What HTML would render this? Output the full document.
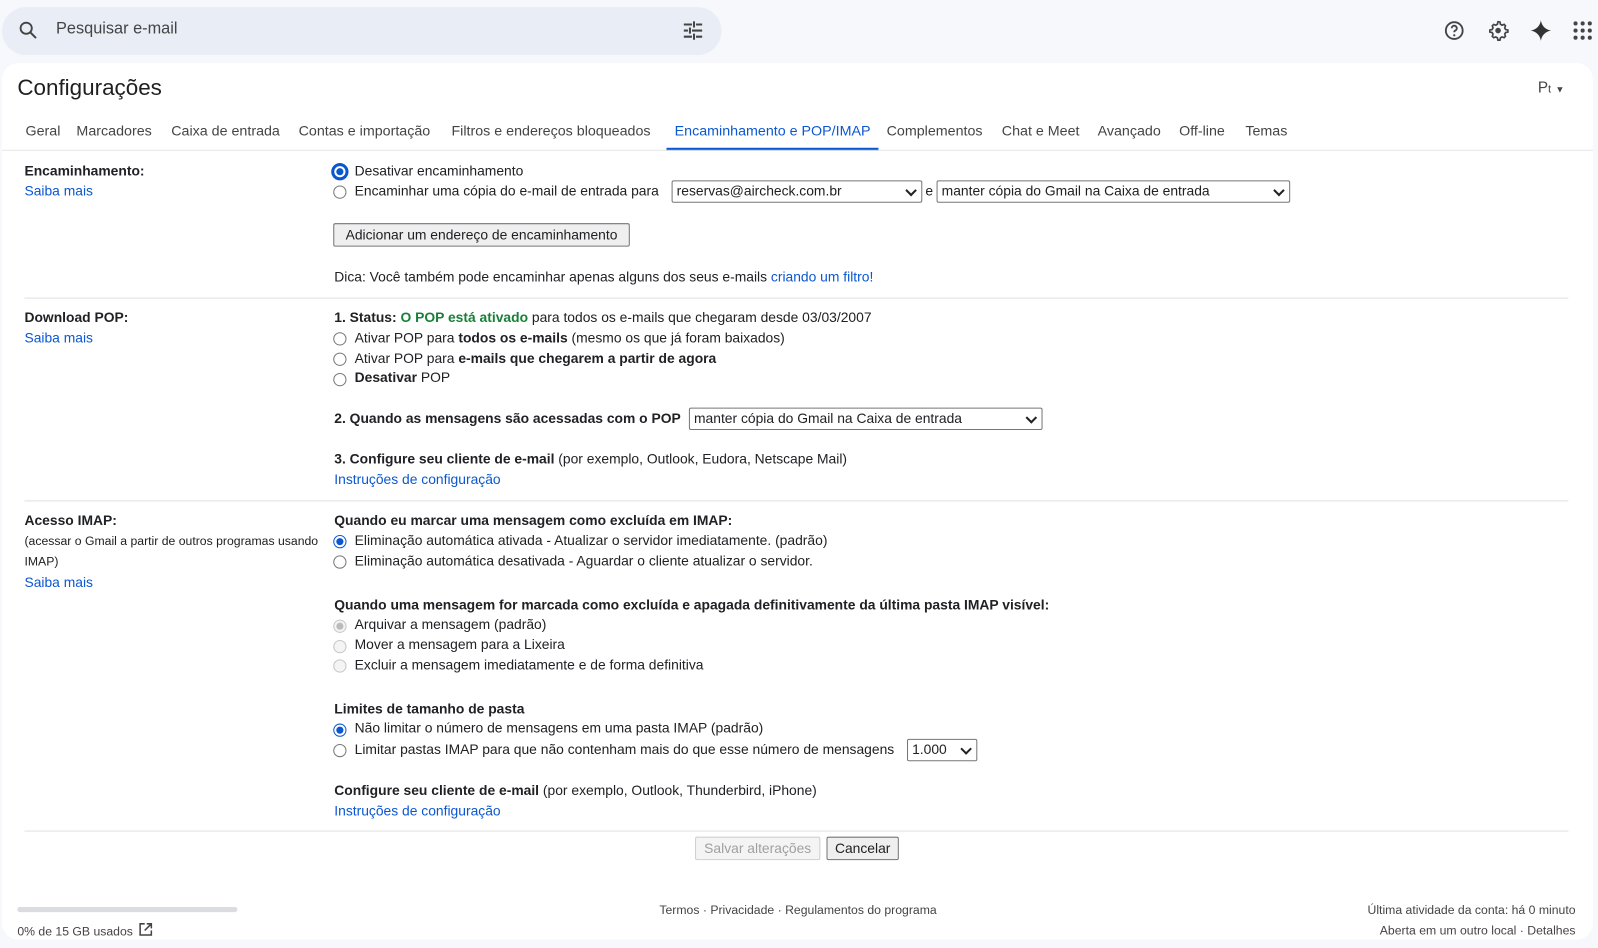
<!DOCTYPE html>
<html><head><meta charset="utf-8"><style>
*{box-sizing:border-box;margin:0;padding:0}
html,body{width:1598px;height:948px;overflow:hidden}
body{background:#f6f8fc;font-family:"Liberation Sans",Arial,sans-serif;font-size:13.6px;color:#202124}
#w{position:absolute;left:0;top:0;width:1568px;height:930px;transform:scale(1.0191);transform-origin:0 0}
.a{position:absolute;white-space:nowrap;line-height:20px}
.l{color:#0b57d0}
b{font-weight:bold}
.hr{position:absolute;left:24px;width:1515px;height:1px;background:#e0e0e0}
.r{position:absolute;width:13px;height:13px;border:1px solid #767676;border-radius:50%;background:#fff}
.r.on{border:1px solid #0b57d0}
.r.on::after{content:"";position:absolute;left:2px;top:2px;width:7px;height:7px;border-radius:50%;background:#0b57d0}
.r.dis{border-color:#c6c6c6;background:#f4f4f4}
.sel{position:absolute;height:22px;border:1px solid #767676;border-radius:2px;background:#fff;line-height:20px;padding-left:4px;font-size:13.6px}
.sel::after{content:"";position:absolute;right:6px;top:5px;width:6px;height:6px;border-right:2px solid #222;border-bottom:2px solid #222;transform:rotate(45deg)}
.btn{position:absolute;height:23px;border:1px solid #767676;border-radius:2px;background:#efefef;line-height:21px;text-align:center}
</style></head><body><div id="w">
<div style="position:absolute;left:2px;top:7px;width:706px;height:47px;border-radius:24px;background:#e9eef6"></div>
<svg style="position:absolute;left:17px;top:19px" width="22" height="22" viewBox="0 0 24 24"><circle cx="9.5" cy="9.5" r="6" fill="none" stroke="#444" stroke-width="2"/><path d="M14 14l6 6" stroke="#444" stroke-width="2.2"/></svg>
<div class="a" style="left:55px;top:19px;font-size:16px;color:#444">Pesquisar e-mail</div>
<svg style="position:absolute;left:670px;top:20px" width="20" height="20" viewBox="0 0 20 20" stroke="#444" stroke-width="2"><path d="M1 4h8M13 4h6M11 1v6M1 10h4M9 10h10M7 7v6M1 16h8M13 16h6M11 13v6"/></svg>
<svg style="position:absolute;left:1416px;top:19px" width="22" height="22" viewBox="0 0 24 24"><circle cx="12" cy="12" r="9" fill="none" stroke="#444" stroke-width="2"/><path d="M9.3 9.5a2.7 2.7 0 1 1 3.7 2.5c-.8.4-1 .9-1 1.8" fill="none" stroke="#444" stroke-width="2"/><circle cx="12" cy="17" r="1.2" fill="#444"/></svg>
<svg style="position:absolute;left:1459px;top:19px" width="22" height="22" viewBox="0 0 24 24"><path d="M12 2.5l2 .3.5 2.4 1.7 1 2.3-.8 1.4 1.5-.8 2.3 1 1.7 2.4.5v2.2l-2.4.5-1 1.7.8 2.3-1.4 1.5-2.3-.8-1.7 1-.5 2.4h-2.2l-.5-2.4-1.7-1-2.3.8-1.5-1.5.8-2.3-1-1.7-2.4-.5v-2.2l2.4-.5 1-1.7-.8-2.3 1.5-1.5 2.3.8 1.7-1 .5-2.4z" fill="none" stroke="#444" stroke-width="1.8"/><circle cx="12" cy="12" r="3" fill="#444"/></svg>
<svg style="position:absolute;left:1501px;top:19px" width="22" height="22" viewBox="0 0 24 24"><path d="M12 1C12.8 7 17 11.2 23 12 17 12.8 12.8 17 12 23 11.2 17 7 12.8 1 12 7 11.2 11.2 7 12 1z" fill="#333"/></svg>
<svg style="position:absolute;left:1543px;top:20px" width="20" height="20" viewBox="0 0 20 20" fill="#444"><circle cx="3" cy="3" r="2"/><circle cx="10" cy="3" r="2"/><circle cx="17" cy="3" r="2"/><circle cx="3" cy="10" r="2"/><circle cx="10" cy="10" r="2"/><circle cx="17" cy="10" r="2"/><circle cx="3" cy="17" r="2"/><circle cx="10" cy="17" r="2"/><circle cx="17" cy="17" r="2"/></svg>

<div style="position:absolute;left:2px;top:62px;width:1561px;height:860px;background:#fff;border-radius:16px"></div>
<div class="a" style="left:17px;top:72px;font-size:22px;line-height:28px;color:#1f1f1f">Configurações</div>
<div class="a" style="left:1509px;top:77px;font-size:15px;color:#444">P<span style="font-size:11px">t</span> <span style="font-size:9px">▼</span></div>

<div class="a" style="top:118px;left:0;width:1563px;height:30px;color:#444;font-size:14px">
<span class="a" style="left:25px">Geral</span><span class="a" style="left:75px">Marcadores</span><span class="a" style="left:168px">Caixa de entrada</span><span class="a" style="left:293px">Contas e importação</span><span class="a" style="left:443px">Filtros e endereços bloqueados</span><span class="a" style="left:662px;color:#0b57d0">Encaminhamento e POP/IMAP</span><span class="a" style="left:870px">Complementos</span><span class="a" style="left:983px">Chat e Meet</span><span class="a" style="left:1077px">Avançado</span><span class="a" style="left:1157px">Off-line</span><span class="a" style="left:1222px">Temas</span>
</div>
<div style="position:absolute;left:654px;top:145px;width:208px;height:3px;background:#0b57d0"></div>
<div style="position:absolute;left:2px;top:147px;width:1561px;height:1px;background:#e6e6e6"></div>

<div class="a" style="left:24px;top:158px"><b>Encaminhamento:</b></div>
<div class="a l" style="left:24px;top:178px">Saiba mais</div>
<div class="r on" style="left:327px;top:162px;box-shadow:0 0 0 2px #0b57d0"></div>
<div class="a" style="left:348px;top:158px">Desativar encaminhamento</div>
<div class="r" style="left:327px;top:182px"></div>
<div class="a" style="left:348px;top:178px">Encaminhar uma cópia do e-mail de entrada para</div>
<div class="sel" style="left:659px;top:177px;width:246px">reservas@aircheck.com.br</div>
<div class="a" style="left:908px;top:178px">e</div>
<div class="sel" style="left:919px;top:177px;width:347px">manter cópia do Gmail na Caixa de entrada</div>
<div class="btn" style="left:327px;top:219px;width:291px">Adicionar um endereço de encaminhamento</div>
<div class="a" style="left:328px;top:262px">Dica: Você também pode encaminhar apenas alguns dos seus e-mails <span class="l">criando um filtro!</span></div>
<div class="hr" style="top:292px"></div>

<div class="a" style="left:24px;top:302px"><b>Download POP:</b></div>
<div class="a l" style="left:24px;top:322px">Saiba mais</div>
<div class="a" style="left:328px;top:302px"><b>1. Status: </b><b style="color:#188038">O POP está ativado</b> para todos os e-mails que chegaram desde 03/03/2007</div>
<div class="r" style="left:327px;top:326px"></div><div class="a" style="left:348px;top:322px">Ativar POP para <b>todos os e-mails</b> (mesmo os que já foram baixados)</div>
<div class="r" style="left:327px;top:346px"></div><div class="a" style="left:348px;top:342px">Ativar POP para <b>e-mails que chegarem a partir de agora</b></div>
<div class="r" style="left:327px;top:366px"></div><div class="a" style="left:348px;top:361px"><b>Desativar</b> POP</div>
<div class="a" style="left:328px;top:401px"><b>2. Quando as mensagens são acessadas com o POP</b></div>
<div class="sel" style="left:676px;top:400px;width:347px">manter cópia do Gmail na Caixa de entrada</div>
<div class="a" style="left:328px;top:441px"><b>3. Configure seu cliente de e-mail</b> (por exemplo, Outlook, Eudora, Netscape Mail)</div>
<div class="a l" style="left:328px;top:461px">Instruções de configuração</div>
<div class="hr" style="top:491px"></div>

<div class="a" style="left:24px;top:501px"><b>Acesso IMAP:</b></div>
<div class="a" style="left:24px;top:521px;font-size:12px">(acessar o Gmail a partir de outros programas usando</div>
<div class="a" style="left:24px;top:541px;font-size:12px">IMAP)</div>
<div class="a l" style="left:24px;top:562px">Saiba mais</div>
<div class="a" style="left:328px;top:501px"><b>Quando eu marcar uma mensagem como excluída em IMAP:</b></div>
<div class="r on" style="left:327px;top:525px"></div><div class="a" style="left:348px;top:521px">Eliminação automática ativada - Atualizar o servidor imediatamente. (padrão)</div>
<div class="r" style="left:327px;top:545px"></div><div class="a" style="left:348px;top:541px">Eliminação automática desativada - Aguardar o cliente atualizar o servidor.</div>
<div class="a" style="left:328px;top:584px"><b>Quando uma mensagem for marcada como excluída e apagada definitivamente da última pasta IMAP visível:</b></div>
<div class="r dis" style="left:327px;top:608px"><div style="position:absolute;left:2px;top:2px;width:7px;height:7px;border-radius:50%;background:#bbb"></div></div><div class="a" style="left:348px;top:603px">Arquivar a mensagem (padrão)</div>
<div class="r dis" style="left:327px;top:628px"></div><div class="a" style="left:348px;top:623px">Mover a mensagem para a Lixeira</div>
<div class="r dis" style="left:327px;top:647px"></div><div class="a" style="left:348px;top:643px">Excluir a mensagem imediatamente e de forma definitiva</div>
<div class="a" style="left:328px;top:686px"><b>Limites de tamanho de pasta</b></div>
<div class="r on" style="left:327px;top:710px"></div><div class="a" style="left:348px;top:705px">Não limitar o número de mensagens em uma pasta IMAP (padrão)</div>
<div class="r" style="left:327px;top:730px"></div><div class="a" style="left:348px;top:726px">Limitar pastas IMAP para que não contenham mais do que esse número de mensagens</div>
<div class="sel" style="left:890px;top:725px;width:69px">1.000</div>
<div class="a" style="left:328px;top:766px"><b>Configure seu cliente de e-mail</b> (por exemplo, Outlook, Thunderbird, iPhone)</div>
<div class="a l" style="left:328px;top:786px">Instruções de configuração</div>
<div class="hr" style="top:815px"></div>
<div class="btn" style="left:682px;top:821px;width:123px;color:#a0a0a0;border-color:#d0d0d0;background:#f4f4f4">Salvar alterações</div>
<div class="btn" style="left:811px;top:821px;width:71px">Cancelar</div>

<div style="position:absolute;left:17px;top:890px;width:216px;height:5px;border-radius:3px;background:#dadce0"></div>
<div class="a" style="left:17px;top:904px;font-size:12px;color:#444">0% de 15 GB usados</div>
<svg style="position:absolute;left:136px;top:905px" width="14" height="14" viewBox="0 0 14 14" fill="none" stroke="#444" stroke-width="1.5"><path d="M6 1.5H1.5v11h11V8M8 1.5h4.5V6M12.5 1.5L6 8"/></svg>
<div class="a" style="left:647px;top:883px;font-size:12px;color:#444">Termos · Privacidade · Regulamentos do programa</div>
<div class="a" style="right:22px;top:883px;font-size:12px;color:#444">Última atividade da conta: há 0 minuto</div>
<div class="a" style="right:22px;top:903px;font-size:12px;color:#444">Aberta em um outro local · Detalhes</div>
</div></body></html>
